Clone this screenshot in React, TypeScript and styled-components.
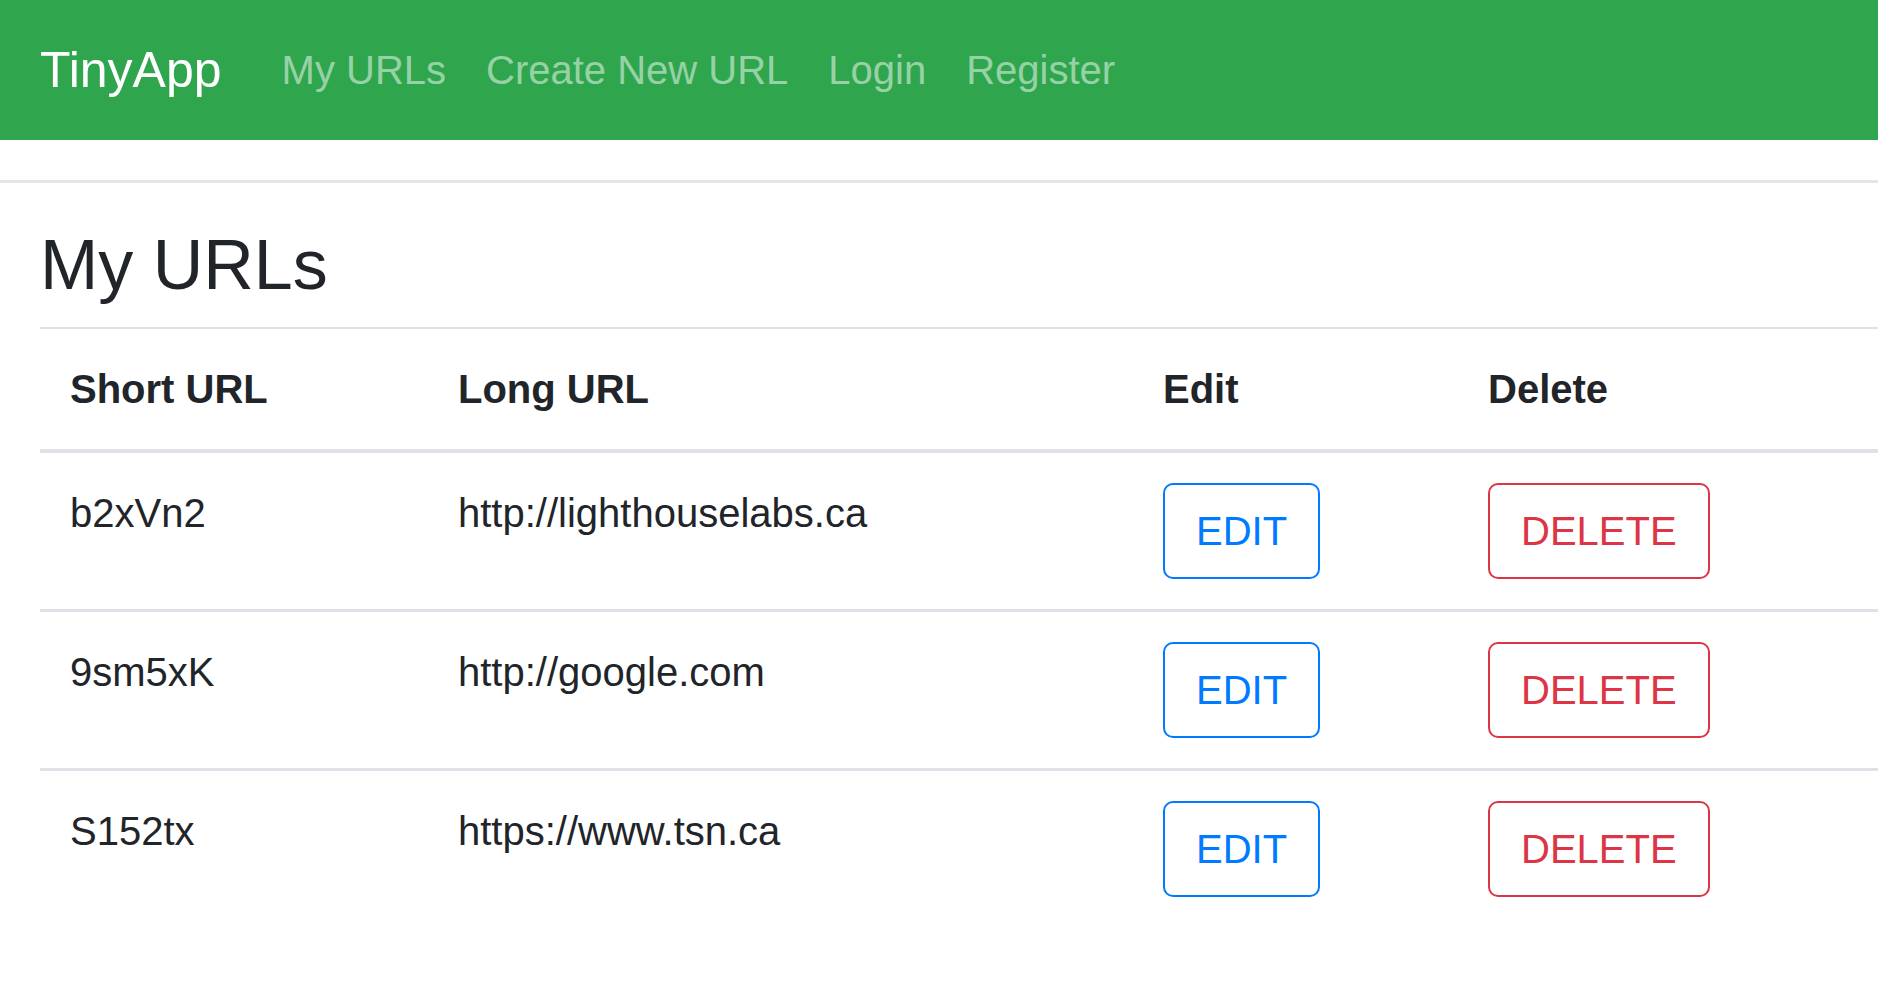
import React from 'react';
import styled, {createGlobalStyle} from 'styled-components';

const GlobalStyle = createGlobalStyle`
  body {
    margin: 0;
    font-family: "Liberation Sans", Arial, sans-serif;
    color: #212529;
    background: #fff;
  }
`;

const Navbar = styled.nav`
  display: flex;
  align-items: center;
  height: 140px;
  padding: 0 40px;
  background-color: #2fa64e;
`;

const Brand = styled.a`
  font-size: 50px;
  line-height: 75px;
  color: #fff;
  margin-right: 40px;
  text-decoration: none;
`;

const NavList = styled.div`
  display: flex;
  align-items: center;
`;

const NavLink = styled.a`
  font-size: 40px;
  line-height: 60px;
  padding: 0 20px;
  color: rgba(255, 255, 255, 0.5);
  text-decoration: none;
`;

const Divider = styled.hr`
  margin: 40px 0;
  border: 0;
  border-top: 3px solid rgba(0, 0, 0, 0.1);
`;

const Main = styled.main`
  padding-left: 40px;
`;

const Title = styled.h3`
  margin: 0 0 20px;
  font-size: 70px;
  font-weight: 400;
  line-height: 84px;
`;

const Table = styled.table`
  width: 100%;
  border-collapse: separate;
  border-spacing: 0;
  font-size: 40px;
  line-height: 60px;
  table-layout: fixed;
`;

const HeadCell = styled.th<{ $w?: number }>`
  box-sizing: border-box;
  ${p => (p.$w ? `width: ${p.$w}px;` : '')}
  text-align: left;
  font-weight: 700;
  padding: 30px;
  vertical-align: bottom;
  border-top: 2px solid #dee2e6;
  border-bottom: 4px solid #dee2e6;
`;

const Row = styled.tr`
  & + & td {
    border-top: 3px solid #dee2e6;
  }
`;

const Cell = styled.td`
  padding: 30px;
  vertical-align: top;
`;

const OutlineButton = styled.button<{ $tone: 'blue' | 'red' }>`
  font-family: inherit;
  font-size: 40px;
  line-height: 60px;
  padding: 16px 31px;
  background: transparent;
  border: 2px solid ${p => (p.$tone === 'blue' ? '#007bff' : '#dc3545')};
  color: ${p => (p.$tone === 'blue' ? '#007bff' : '#dc3545')};
  border-radius: 10px;
  cursor: pointer;
`;

const urls = [
  {short: 'b2xVn2', long: 'http://lighthouselabs.ca'},
  {short: '9sm5xK', long: 'http://google.com'},
  {short: 'S152tx', long: 'https://www.tsn.ca'},
];

function App() {
  return (
    <>
      <GlobalStyle />
      <Navbar>
        <Brand href="#">TinyApp</Brand>
        <NavList>
          <NavLink href="#">My URLs</NavLink>
          <NavLink href="#">Create New URL</NavLink>
          <NavLink href="#">Login</NavLink>
          <NavLink href="#">Register</NavLink>
        </NavList>
      </Navbar>
      <Divider />
      <Main>
        <Title>My URLs</Title>
        <Table>
          <thead>
            <tr>
              <HeadCell $w={388}>Short URL</HeadCell>
              <HeadCell $w={705}>Long URL</HeadCell>
              <HeadCell $w={325}>Edit</HeadCell>
              <HeadCell>Delete</HeadCell>
            </tr>
          </thead>
          <tbody>
            {urls.map(u => (
              <Row key={u.short}>
                <Cell>{u.short}</Cell>
                <Cell>{u.long}</Cell>
                <Cell>
                  <OutlineButton $tone="blue">EDIT</OutlineButton>
                </Cell>
                <Cell>
                  <OutlineButton $tone="red">DELETE</OutlineButton>
                </Cell>
              </Row>
            ))}
          </tbody>
        </Table>
      </Main>
    </>
  );
}

export default App;
